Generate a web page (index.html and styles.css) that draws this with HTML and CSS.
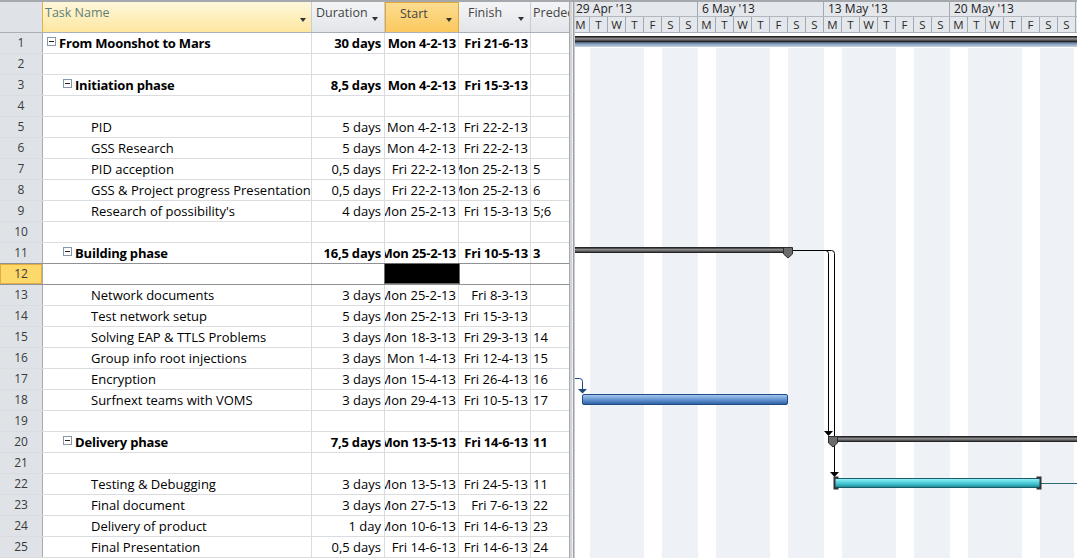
FILE: index.html
```html
<!DOCTYPE html>
<html>
<head>
<meta charset="utf-8">
<title>Project Gantt</title>
<link rel="stylesheet" href="styles.css">
</head>
<body>
<div class="app">
  <div class="table">
    <div class="cols thead">
      <div class="th corner"></div>
      <div class="th task">Task Name<i class="dd"></i></div>
      <div class="th">Duration<i class="dd"></i></div>
      <div class="th start">Start<i class="dd"></i></div>
      <div class="th fin">Finish<i class="dd"></i></div>
      <div class="th pre">Predecessors</div>
    </div>
    <div class="tbody">
      <div class="cols row sum"><div class="c num">1</div><div class="c name l0"><span class="tog"></span>From Moonshot to Mars</div><div class="c dur">30 days</div><div class="c st"><span>Mon 4-2-13</span></div><div class="c fn"><span>Fri 21-6-13</span></div><div class="c pr"></div></div>
      <div class="cols row"><div class="c num">2</div><div class="c name"></div><div class="c dur"></div><div class="c st"></div><div class="c fn"></div><div class="c pr"></div></div>
      <div class="cols row sum"><div class="c num">3</div><div class="c name l1"><span class="tog"></span>Initiation phase</div><div class="c dur">8,5 days</div><div class="c st"><span>Mon 4-2-13</span></div><div class="c fn"><span>Fri 15-3-13</span></div><div class="c pr"></div></div>
      <div class="cols row"><div class="c num">4</div><div class="c name"></div><div class="c dur"></div><div class="c st"></div><div class="c fn"></div><div class="c pr"></div></div>
      <div class="cols row"><div class="c num">5</div><div class="c name l2">PID</div><div class="c dur">5 days</div><div class="c st"><span>Mon 4-2-13</span></div><div class="c fn"><span>Fri 22-2-13</span></div><div class="c pr"></div></div>
      <div class="cols row"><div class="c num">6</div><div class="c name l2">GSS Research</div><div class="c dur">5 days</div><div class="c st"><span>Mon 4-2-13</span></div><div class="c fn"><span>Fri 22-2-13</span></div><div class="c pr"></div></div>
      <div class="cols row"><div class="c num">7</div><div class="c name l2">PID acception</div><div class="c dur">0,5 days</div><div class="c st"><span>Fri 22-2-13</span></div><div class="c fn"><span>Mon 25-2-13</span></div><div class="c pr">5</div></div>
      <div class="cols row"><div class="c num">8</div><div class="c name l2">GSS &amp; Project progress Presentation</div><div class="c dur">0,5 days</div><div class="c st"><span>Fri 22-2-13</span></div><div class="c fn"><span>Mon 25-2-13</span></div><div class="c pr">6</div></div>
      <div class="cols row"><div class="c num">9</div><div class="c name l2">Research of possibility's</div><div class="c dur">4 days</div><div class="c st"><span>Mon 25-2-13</span></div><div class="c fn"><span>Fri 15-3-13</span></div><div class="c pr">5;6</div></div>
      <div class="cols row"><div class="c num">10</div><div class="c name"></div><div class="c dur"></div><div class="c st"></div><div class="c fn"></div><div class="c pr"></div></div>
      <div class="cols row sum presel"><div class="c num">11</div><div class="c name l1"><span class="tog"></span>Building phase</div><div class="c dur">16,5 days</div><div class="c st"><span>Mon 25-2-13</span></div><div class="c fn"><span>Fri 10-5-13</span></div><div class="c pr">3</div></div>
      <div class="cols row sel"><div class="c num">12</div><div class="c name"></div><div class="c dur"></div><div class="c st"></div><div class="c fn"></div><div class="c pr"></div></div>
      <div class="cols row"><div class="c num">13</div><div class="c name l2">Network documents</div><div class="c dur">3 days</div><div class="c st"><span>Mon 25-2-13</span></div><div class="c fn"><span>Fri 8-3-13</span></div><div class="c pr"></div></div>
      <div class="cols row"><div class="c num">14</div><div class="c name l2">Test network setup</div><div class="c dur">5 days</div><div class="c st"><span>Mon 25-2-13</span></div><div class="c fn"><span>Fri 15-3-13</span></div><div class="c pr"></div></div>
      <div class="cols row"><div class="c num">15</div><div class="c name l2">Solving EAP &amp; TTLS Problems</div><div class="c dur">3 days</div><div class="c st"><span>Mon 18-3-13</span></div><div class="c fn"><span>Fri 29-3-13</span></div><div class="c pr">14</div></div>
      <div class="cols row"><div class="c num">16</div><div class="c name l2">Group info root injections</div><div class="c dur">3 days</div><div class="c st"><span>Mon 1-4-13</span></div><div class="c fn"><span>Fri 12-4-13</span></div><div class="c pr">15</div></div>
      <div class="cols row"><div class="c num">17</div><div class="c name l2">Encryption</div><div class="c dur">3 days</div><div class="c st"><span>Mon 15-4-13</span></div><div class="c fn"><span>Fri 26-4-13</span></div><div class="c pr">16</div></div>
      <div class="cols row"><div class="c num">18</div><div class="c name l2">Surfnext teams with VOMS</div><div class="c dur">3 days</div><div class="c st"><span>Mon 29-4-13</span></div><div class="c fn"><span>Fri 10-5-13</span></div><div class="c pr">17</div></div>
      <div class="cols row"><div class="c num">19</div><div class="c name"></div><div class="c dur"></div><div class="c st"></div><div class="c fn"></div><div class="c pr"></div></div>
      <div class="cols row sum"><div class="c num">20</div><div class="c name l1"><span class="tog"></span>Delivery phase</div><div class="c dur">7,5 days</div><div class="c st"><span>Mon 13-5-13</span></div><div class="c fn"><span>Fri 14-6-13</span></div><div class="c pr">11</div></div>
      <div class="cols row"><div class="c num">21</div><div class="c name"></div><div class="c dur"></div><div class="c st"></div><div class="c fn"></div><div class="c pr"></div></div>
      <div class="cols row"><div class="c num">22</div><div class="c name l2">Testing &amp; Debugging</div><div class="c dur">3 days</div><div class="c st"><span>Mon 13-5-13</span></div><div class="c fn"><span>Fri 24-5-13</span></div><div class="c pr">11</div></div>
      <div class="cols row"><div class="c num">23</div><div class="c name l2">Final document</div><div class="c dur">3 days</div><div class="c st"><span>Mon 27-5-13</span></div><div class="c fn"><span>Fri 7-6-13</span></div><div class="c pr">22</div></div>
      <div class="cols row"><div class="c num">24</div><div class="c name l2">Delivery of product</div><div class="c dur">1 day</div><div class="c st"><span>Mon 10-6-13</span></div><div class="c fn"><span>Fri 14-6-13</span></div><div class="c pr">23</div></div>
      <div class="cols row"><div class="c num">25</div><div class="c name l2">Final Presentation</div><div class="c dur">0,5 days</div><div class="c st"><span>Fri 14-6-13</span></div><div class="c fn"><span>Fri 14-6-13</span></div><div class="c pr">24</div></div>
    </div>
  </div>
  <div class="splitter"></div>
  <div class="gantt">
    <div class="ghead">
      <div class="tier1">
        <div class="wk">29 Apr '13</div>
        <div class="wk">6 May '13</div>
        <div class="wk">13 May '13</div>
        <div class="wk">20 May '13</div>
      </div>
      <div class="tier2">
        <div class="day">M</div><div class="day">T</div><div class="day">W</div><div class="day">T</div><div class="day">F</div><div class="day">S</div><div class="day">S</div>
        <div class="day">M</div><div class="day">T</div><div class="day">W</div><div class="day">T</div><div class="day">F</div><div class="day">S</div><div class="day">S</div>
        <div class="day">M</div><div class="day">T</div><div class="day">W</div><div class="day">T</div><div class="day">F</div><div class="day">S</div><div class="day">S</div>
        <div class="day">M</div><div class="day">T</div><div class="day">W</div><div class="day">T</div><div class="day">F</div><div class="day">S</div><div class="day">S</div>
      </div>
    </div>
    <div class="gbody">
      <svg class="chart" width="502" height="525" viewBox="0 0 502 525">
        <defs>
          <linearGradient id="gSum" x1="0" y1="0" x2="0" y2="1">
            <stop offset="0" stop-color="#161616"/>
            <stop offset="0.2" stop-color="#3c3c3c"/>
            <stop offset="0.4" stop-color="#8c8c8c"/>
            <stop offset="0.65" stop-color="#6a6a6a"/>
            <stop offset="0.85" stop-color="#333"/>
            <stop offset="1" stop-color="#141414"/>
          </linearGradient>
          <linearGradient id="gProj" x1="0" y1="0" x2="0" y2="1">
            <stop offset="0" stop-color="#3f5878"/>
            <stop offset="0.35" stop-color="#8298b8"/>
            <stop offset="1" stop-color="#c9d4e4"/>
          </linearGradient>
          <linearGradient id="gBlue" x1="0" y1="0" x2="0" y2="1">
            <stop offset="0" stop-color="#aecbef"/>
            <stop offset="0.35" stop-color="#7aa6dd"/>
            <stop offset="0.7" stop-color="#4e80c1"/>
            <stop offset="1" stop-color="#2d5b98"/>
          </linearGradient>
          <linearGradient id="gCyan" x1="0" y1="0" x2="0" y2="1">
            <stop offset="0" stop-color="#a2f1f7"/>
            <stop offset="0.35" stop-color="#5fdbe6"/>
            <stop offset="0.7" stop-color="#37b5c3"/>
            <stop offset="1" stop-color="#1f7f8b"/>
          </linearGradient>
        </defs>
        <rect x="0" y="0" width="502" height="15" fill="#fff"/>
        <rect x="0" y="3" width="502" height="6" fill="url(#gSum)"/>
        <rect x="0" y="9" width="502" height="5" fill="url(#gProj)"/>

        <rect x="0" y="214" width="213" height="6" fill="url(#gSum)"/>
        <polygon points="208.5,214.5 217.5,214.5 217.5,221 213,225 208.5,221" fill="#6b6b6b" stroke="#2e2e2e"/>

        <path d="M218 217.5 H250.5 Q253.5 217.5 253.5 220.5 V398" fill="none" stroke="#000"/>
        <path d="M218 217.5 H256.5 Q259.5 217.5 259.5 220.5 V439" fill="none" stroke="#000"/>
        <polygon points="249,398 258,398 253.5,403" fill="#000"/>
        <polygon points="255,439 264,439 259.5,444" fill="#000"/>

        <path d="M0 345.5 H4.5 Q7.5 345.5 7.5 348.5 V356" fill="none" stroke="#1f497d"/>
        <polygon points="3,356 12,356 7.5,360.5" fill="#1f497d"/>
        <rect x="7.5" y="361.5" width="205" height="10" rx="1.5" fill="url(#gBlue)" stroke="#1f4c88"/>

        <rect x="253" y="403" width="249" height="6" fill="url(#gSum)"/>
        <polygon points="253.5,403.5 262.5,403.5 262.5,410 258,414 253.5,410" fill="#6b6b6b" stroke="#2e2e2e"/>

        <path d="M466 450.5 H502" stroke="#2a6d76"/>
        <rect x="259.5" y="445.5" width="206" height="9" fill="url(#gCyan)" stroke="#145f6a"/>
        <path d="M263.5 444.5 H259.5 V455.5 H263.5" fill="none" stroke="#333" stroke-width="2"/>
        <path d="M461.5 444.5 H465.5 V455.5 H461.5" fill="none" stroke="#333" stroke-width="2"/>
      </svg>
    </div>
  </div>
</div>
</body>
</html>
```

FILE: styles.css
```css
* { box-sizing: border-box; }

body {
  margin: 0;
  background: #fff;
  font-family: "Open Sans", "Noto Sans", sans-serif;
  font-size: 13px;
  color: #000;
}

.app {
  width: 1077px;
  height: 558px;
  display: flex;
  overflow: hidden;
  border-top: 2px solid #a5a8ac;
}

.table {
  width: 569px;
  flex: none;
}

.cols {
  display: grid;
  grid-template-columns: 43px 269px 73px 74px 72px 38px;
}

.thead {
  height: 31px;
  border-bottom: 1px solid #a9b0b8;
}

.th {
  position: relative;
  border-right: 1px solid #c9cdd2;
  background: linear-gradient(#f4f5f7, #e2e5e9);
  color: #454545;
  font-size: 12.5px;
  line-height: 16px;
  padding: 3px 4px 0;
  white-space: nowrap;
  overflow: hidden;
}

.th.corner {
  background: #dfe3e8;
  border-right-color: #e2b23e;
}

.th.task {
  background: linear-gradient(#fef7dc, #fde79f);
  color: #5f8077;
  padding-left: 2px;
}

.th.start {
  background: linear-gradient(#fcdc90, #fbc95e);
  border: 1px solid #e0a73c;
  border-bottom: none;
  padding-left: 14px;
}

.th.fin {
  padding-left: 9px;
}

.th.pre {
  padding-left: 2px;
  border-right: none;
}

.dd {
  position: absolute;
  right: 6px;
  top: 15px;
  width: 0;
  height: 0;
  border-left: 3.5px solid transparent;
  border-right: 3.5px solid transparent;
  border-top: 4px solid #333;
}

.th.task .dd { right: 5px; top: 16px; }

.row {
  height: 21px;
  border-bottom: 1px solid #dadcdf;
}

.row.presel { border-bottom-color: #8f9194; }
.row.sel { border-bottom-color: #8f9194; }

.c {
  border-right: 1px solid #dadcdf;
  line-height: 20px;
  white-space: nowrap;
  overflow: hidden;
}

.num {
  background: #dfe3e8;
  border-right-color: #a3aab3;
  text-align: center;
  color: #3a3a3a;
  font-size: 12px;
}

.row.sel .num {
  background: #fdd86a;
  box-shadow: inset 0 0 0 1px #e3ad40;
}

.row.sel .st {
  background: #000;
  border: 1px solid #6a6a6a;
  margin: -1px -1px 0 -1px;
}

.name {
  display: flex;
  align-items: center;
}

.name.l0 { padding-left: 4px; }
.name.l1 { padding-left: 20px; }
.name.l2 { padding-left: 48px; }

.sum { font-weight: 700; letter-spacing: -0.2px; }
.sum .num { letter-spacing: 0; font-weight: 400; }

.tog {
  flex: none;
  width: 9px;
  height: 9px;
  margin-right: 3px;
  margin-top: -4px;
  border: 1px solid #8797aa;
  background: #fff linear-gradient(#222, #222) center / 5px 1px no-repeat;
}

.dur {
  text-align: right;
  padding-right: 3px;
}

.st, .fn {
  display: flex;
  justify-content: flex-end;
  padding-right: 2px;
}

.st span, .fn span {
  flex: none;
}

.pr {
  padding-left: 2px;
  border-right: none;
}

.splitter {
  flex: none;
  width: 6px;
  background: linear-gradient(to right, #a6a9ad 0 1px, #d2d4d7 1px 3px, #eeeeee 3px 4px, #9ea2a7 4px 5px, #c8cbcf 5px);
}

.gantt {
  flex: 1;
  position: relative;
  overflow: hidden;
}

.ghead {
  height: 31px;
  border-bottom: 1px solid #a9b0b8;
  background: #e4e7eb;
  overflow: hidden;
}

.tier1 {
  display: flex;
  margin-left: -3px;
  height: 15px;
  border-bottom: 1px solid #b3b8be;
  overflow: hidden;
}

.wk {
  flex: none;
  width: 126px;
  border-right: 1px solid #a3a9b0;
  padding-left: 4px;
  font-size: 12px;
  line-height: 14px;
  color: #222;
  white-space: nowrap;
  overflow: hidden;
}

.tier2 {
  display: flex;
  margin-left: -3px;
  height: 15px;
  overflow: hidden;
}

.day {
  flex: none;
  width: 18px;
  border-right: 1px solid #a3a9b0;
  text-align: center;
  font-size: 11.5px;
  line-height: 15px;
  color: #2a2a2a;
  overflow: hidden;
}

.gbody {
  position: relative;
  height: 525px;
  background: repeating-linear-gradient(to right, #fff 0 18px, #eef1f6 18px 72px, #fff 72px 90px, #eef1f6 90px 126px);
  background-position: -3px 0;
}

.chart {
  position: absolute;
  left: 0;
  top: 0;
}
```
